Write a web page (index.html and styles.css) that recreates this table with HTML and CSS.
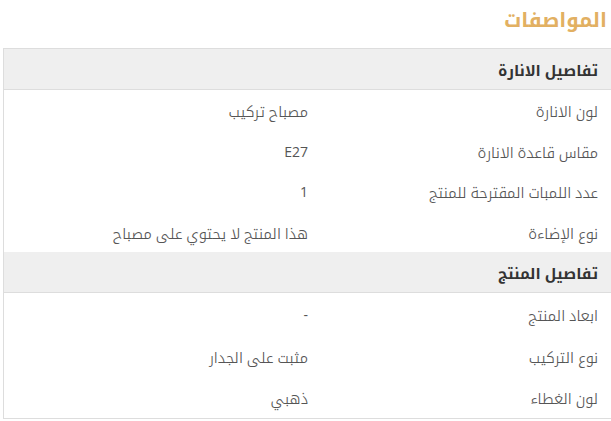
FILE: index.html
```html
<!DOCTYPE html>
<html lang="ar" dir="rtl">
<head>
<meta charset="utf-8">
<link rel="stylesheet" href="styles.css">
</head>
<body>
<div class="page">
  <h2 class="title">المواصفات</h2>
  <div class="spec">
    <div class="group-head">تفاصيل الانارة</div>
    <div class="row r1"><div class="label">لون الانارة</div><div class="value">مصباح تركيب</div></div>
    <div class="row r1"><div class="label">مقاس قاعدة الانارة</div><div class="value num">E27</div></div>
    <div class="row r1"><div class="label">عدد اللمبات المقترحة للمنتج</div><div class="value num">1</div></div>
    <div class="row r1"><div class="label">نوع الإضاءة</div><div class="value">هذا المنتج لا يحتوي على مصباح</div></div>
    <div class="group-head">تفاصيل المنتج</div>
    <div class="row r2"><div class="label">ابعاد المنتج</div><div class="value num">-</div></div>
    <div class="row r2"><div class="label">نوع التركيب</div><div class="value">مثبت على الجدار</div></div>
    <div class="row r2"><div class="label">لون الغطاء</div><div class="value">ذهبي</div></div>
  </div>
</div>
</body>
</html>
```

FILE: styles.css
```css
html, body {
  margin: 0;
  padding: 0;
  background: #ffffff;
}
body {
  direction: rtl;
  font-family: "Open Sans", "Noto Kufi Arabic", "DejaVu Sans", sans-serif;
  color: #555555;
}
.page {
  padding: 8px 0 0 0;
}
.title {
  margin: 0 4px 16px 0;
  font-size: 20px;
  line-height: 24px;
  font-weight: 700;
  color: #e2b062;
}
.spec {
  margin: 0 -1px 0 3px;
  border: 1px solid #dddddd;
}
.group-head {
  height: 40px;
  box-sizing: border-box;
  display: flex;
  align-items: center;
  padding: 3px 13px 0 0;
  height: 41px;
  background: #efefef;
  border-bottom: 1px solid #dddddd;
  font-size: 15px;
  font-weight: 700;
  color: #333333;
}
.row {
  display: grid;
  grid-template-columns: 290px 1fr;
  align-items: center;
  font-size: 15px;
  font-weight: 300;
  color: #555555;
}
.r1 { height: 40.5px; }
.r2 { height: 41.7px; }
.label, .value {
  padding-right: 13px;
  line-height: 20px;
  padding-top: 2px;
}
.num {
  font-size: 14px;
  font-weight: 400;
  color: #555555;
}
```
